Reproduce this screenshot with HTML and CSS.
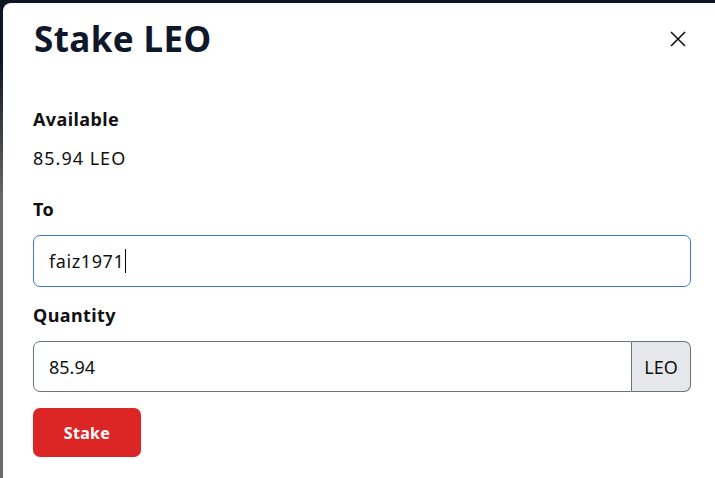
FILE: index.html
```html
<!DOCTYPE html>
<html>
<head>
<meta charset="utf-8">
<link rel="stylesheet" href="styles.css">
</head>
<body>
<div class="modal">
  <div class="modal-header">
    <h2 class="modal-title">Stake LEO</h2>
    <button class="close-btn" aria-label="Close">
      <svg width="16" height="16" viewBox="0 0 16 16"><path d="M1 1 L15 15 M15 1 L1 15" stroke="#111" stroke-width="1.6" fill="none"/></svg>
    </button>
  </div>
  <div class="modal-body">
    <div class="field first">
      <div class="label">Available</div>
      <div class="value">85.94 LEO</div>
    </div>
    <div class="field">
      <label class="label">To</label>
      <div class="input focused"><span class="input-text">faiz1971</span><span class="caret"></span></div>
    </div>
    <div class="field last">
      <label class="label">Quantity</label>
      <div class="input-group">
        <div class="input grouped"><span class="input-text">85.94</span></div>
        <div class="addon">LEO</div>
      </div>
    </div>
    <button class="stake-btn">Stake</button>
  </div>
</div>
</body>
</html>
```
FILE: styles.css
```css
html, body {
  margin: 0;
  padding: 0;
  height: 100%;
}
body {
  background: linear-gradient(to bottom, #0e1624 0px, #0e1624 60px, #6a6a6c 200px, #6a6a6c 100%);
  font-family: "Noto Sans", "Open Sans", sans-serif;
  color: #111827;
  overflow: hidden;
}
.modal {
  margin: 3px 0 0 3px;
  background: #fff;
  border-top-left-radius: 8px;
  min-height: 475px;
  box-sizing: border-box;
}
.modal-header {
  display: flex;
  justify-content: space-between;
  align-items: center;
  padding: 14px 29px 0 31px;
}
.modal-title {
  margin: 0;
  font-size: 35px;
  line-height: 44px;
  font-weight: 700;
  letter-spacing: 0.4px;
  color: #0f172a;
}
.close-btn {
  background: none;
  border: none;
  padding: 0;
  width: 16px;
  height: 16px;
  display: flex;
}
.modal-body {
  padding: 45px 24px 0 30px;
}
.field {
  margin-bottom: 15px;
}
.field.first {
  margin-bottom: 25px;
}
.field.last {
  margin-bottom: 13px;
}
.label {
  display: block;
  font-size: 18px;
  line-height: 26px;
  font-weight: 700;
  letter-spacing: 0.4px;
  color: #111;
  margin-bottom: 13px;
}
.value {
  font-size: 18px;
  line-height: 26px;
  letter-spacing: 1px;
  color: #111;
}
.input {
  height: 52px;
  box-sizing: border-box;
  border: 1px solid #6b7280;
  border-radius: 7px;
  display: flex;
  align-items: center;
  padding: 0 15px;
  font-family: "Noto Sans", "Open Sans", sans-serif;
  font-size: 18px;
  color: #111;
}
.input.focused {
  border-color: #3b76e8;
}
.input.focused .input-text {
  letter-spacing: 0.6px;
}
.caret {
  display: inline-block;
  width: 1px;
  height: 24px;
  background: #000;
  margin-left: 1px;
}
.input-group {
  display: flex;
}
.input.grouped {
  flex: 1;
  border-top-right-radius: 0;
  border-bottom-right-radius: 0;
  height: 51px;
}
.addon {
  width: 59px;
  box-sizing: border-box;
  border: 1px solid #6b7280;
  border-left: none;
  border-radius: 0 7px 7px 0;
  background: #e5e7eb;
  display: flex;
  align-items: center;
  justify-content: center;
  font-family: "Noto Sans", "Open Sans", sans-serif;
  font-size: 18px;
  color: #111;
}
.stake-btn {
  margin-top: 3px;
  width: 108px;
  height: 49px;
  border: none;
  border-radius: 7px;
  background: #dc2626;
  color: #fff;
  font-family: "Noto Sans", "Open Sans", sans-serif;
  font-weight: 700;
  font-size: 16px;
  letter-spacing: 0.3px;
}
```
